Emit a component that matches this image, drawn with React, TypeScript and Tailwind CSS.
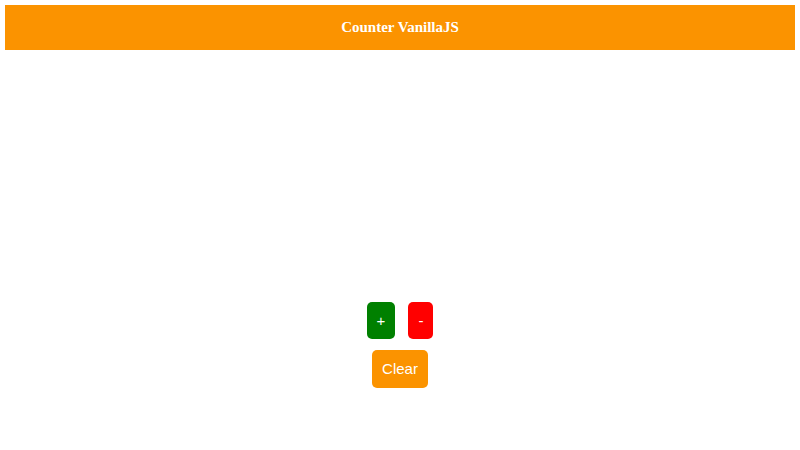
export default function App() {
  return (
    <div className="min-h-[450px] bg-white p-[5px]">
      {/* Header */}
      <header className="flex h-[45px] items-center justify-center bg-[#fb9300]">
        <h1 className="font-['Liberation_Serif',serif] text-[15px] font-bold text-white">Counter VanillaJS</h1>
      </header>

      {/* Counter controls */}
      <div className="mt-[252px] flex flex-col items-center gap-[11px] font-['Liberation_Sans',Arial,sans-serif] text-[15px] leading-[17.25px] text-white">
        <div className="flex items-center gap-[13px]">
          <button className="rounded-[5px] bg-[#008000] p-[10px]">+</button>
          <button className="rounded-[5px] bg-[#ff0000] p-[10px]">-</button>
        </div>
        <button className="rounded-[5px] bg-[#fb9300] p-[10px]">Clear</button>
      </div>
    </div>
  )
}
